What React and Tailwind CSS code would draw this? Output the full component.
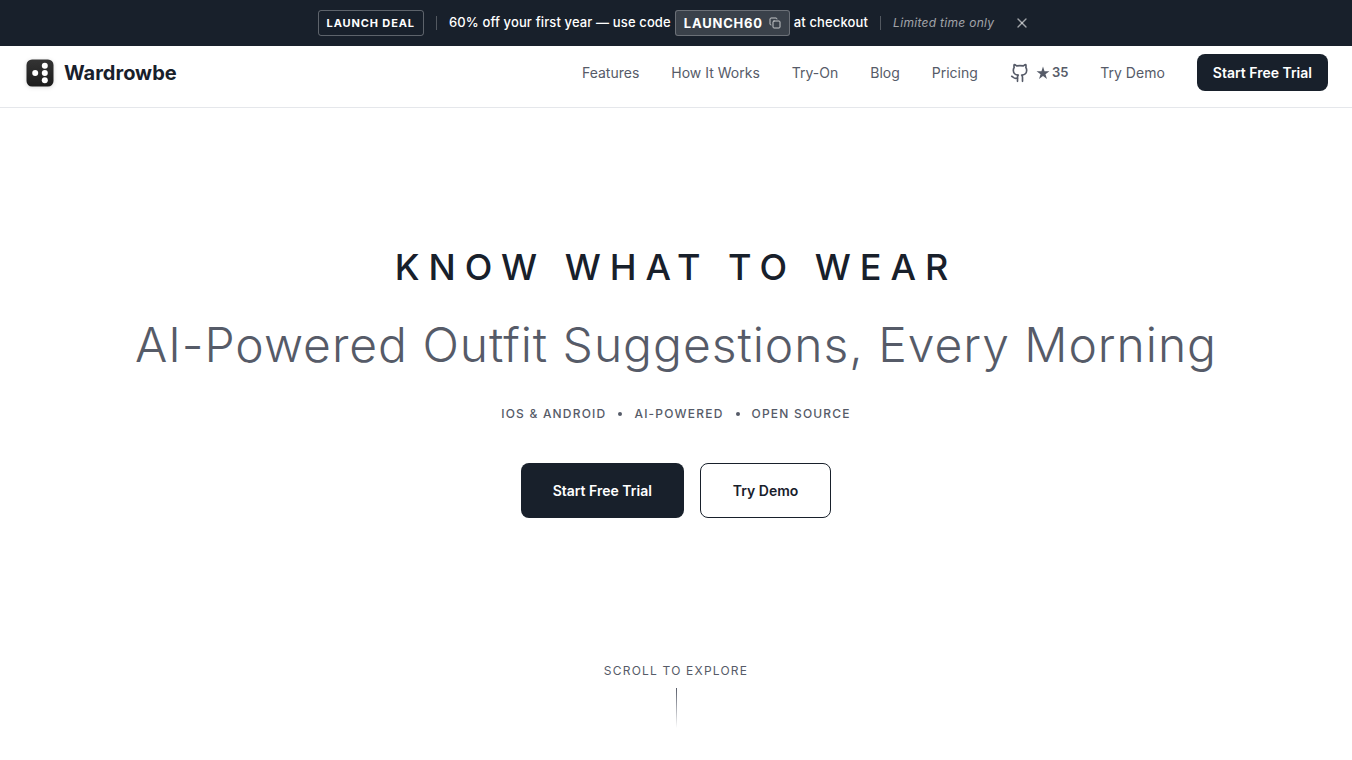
import { useState } from 'react';
import { Copy, Github, X } from 'lucide-react';

const NAV_LINKS = [
  { label: 'Features', href: '#features' },
  { label: 'How It Works', href: '#how-it-works' },
  { label: 'Try-On', href: '#try-on' },
  { label: 'Blog', href: '#blog' },
  { label: 'Pricing', href: '#pricing' },
];

const TAGS = ['iOS & Android', 'AI-Powered', 'Open Source'];

// ─── Logo mark ───────────────────────────────────────────────────────────────
function Logo() {
  return (
    <svg className="w-8 h-8 drop-shadow-sm" viewBox="0 0 32 32" aria-hidden="true">
      <defs>
        <linearGradient id="logo-bg" x1="0" y1="0" x2="0" y2="1">
          <stop offset="0" stopColor="#343434" />
          <stop offset="1" stopColor="#1b1b1b" />
        </linearGradient>
      </defs>
      <rect x="2.5" y="2.5" width="27" height="27" rx="5.5" fill="url(#logo-bg)" />
      <g fill="#fff">
        <circle cx="11.2" cy="16" r="3" />
        <circle cx="20.8" cy="8.8" r="3" />
        <circle cx="20.8" cy="16" r="3" />
        <circle cx="20.8" cy="23.2" r="3" />
      </g>
    </svg>
  );
}

function StarIcon() {
  return (
    <svg className="h-3.5 w-3.5" viewBox="0 0 24 24" fill="currentColor" aria-hidden="true">
      <path d="M12 1l2.6 8H23l-6.8 5 2.6 8.2L12 17.1l-6.8 5.1L7.8 14 1 9h8.4z" />
    </svg>
  );
}

// ─── Launch banner ───────────────────────────────────────────────────────────
function LaunchBanner({ onClose }) {
  return (
    <div className="flex h-[46px] items-center justify-center gap-3 bg-[#18202b] px-4 text-[13px] font-medium text-white">
      <span className="rounded-[3px] border border-white/30 px-2 py-1 text-[11px] leading-4 font-bold tracking-[0.08em]">
        LAUNCH DEAL
      </span>
      <span className="h-3.5 w-px bg-white/25" />
      <p className="flex items-center gap-1 tracking-[0.01em]">
        60% off your first year — use code
        <button
          type="button"
          className="flex items-center gap-1.5 rounded-[3px] border border-white/25 bg-white/15 px-2 py-0.5 leading-5 font-bold tracking-[0.06em]"
        >
          LAUNCH60
          <Copy className="h-3 w-3 opacity-70" />
        </button>
        at checkout
      </p>
      <span className="h-3.5 w-px bg-white/25" />
      <em className="text-xs font-normal tracking-wide text-white/60">Limited time only</em>
      <button type="button" aria-label="Dismiss" onClick={onClose} className="ml-1 p-1 text-white/60">
        <X className="h-4 w-4" />
      </button>
    </div>
  );
}

// ─── Top navigation ──────────────────────────────────────────────────────────
function Navbar() {
  return (
    <header className="flex items-center justify-between border-b border-gray-200 px-6 pt-2 pb-4">
      <a href="#home" className="flex items-center gap-2 text-xl font-bold">
        <Logo />
        Wardrowbe
      </a>
      <nav className="flex items-center gap-8 text-sm text-[#565b68]">
        {NAV_LINKS.map((link) => (
          <a key={link.label} href={link.href}>{link.label}</a>
        ))}
        <a href="#github" aria-label="GitHub stars" className="flex items-center gap-1.5">
          <Github className="h-5 w-5" />
          <span className="flex items-center gap-0.5 text-[13px] font-semibold">
            <StarIcon />
            35
          </span>
        </a>
        <a href="#demo">Try Demo</a>
        <a href="#trial" className="rounded-lg bg-[#18202b] px-4 py-2 leading-[21px] font-semibold text-white">
          Start Free Trial
        </a>
      </nav>
    </header>
  );
}

// ─── Hero ────────────────────────────────────────────────────────────────────
function Hero() {
  return (
    <main className="flex flex-1 flex-col items-center justify-center px-6 text-center">
      <h1 className="text-4xl leading-10 font-medium tracking-[0.25em] uppercase">Know What To Wear</h1>
      <p className="mt-7 text-5xl leading-[60px] font-light tracking-[0.02em] text-[#565b68]">
        AI-Powered Outfit Suggestions, Every Morning
      </p>
      <ul className="mt-[30px] flex items-center gap-3 text-xs leading-[18px] font-medium tracking-widest text-[#565b68] uppercase">
        {TAGS.map((tag, i) => (
          <li key={tag} className="flex items-center gap-3">
            {i > 0 && <span className="h-1 w-1 rounded-full bg-[#565b68]" />}
            {tag}
          </li>
        ))}
      </ul>
      <div className="mt-10 flex gap-4 text-sm font-semibold">
        <a href="#trial" className="rounded-lg bg-[#18202b] px-8 py-[17px] leading-[21px] text-white">
          Start Free Trial
        </a>
        <a href="#demo" className="rounded-lg border border-[#18202b] px-8 py-4 leading-[21px]">
          Try Demo
        </a>
      </div>
    </main>
  );
}

export default function App() {
  const [bannerOpen, setBannerOpen] = useState(true);

  return (
    <div className="flex min-h-screen flex-col bg-white font-[Inter,sans-serif] text-[#18202b]">
      {bannerOpen && <LaunchBanner onClose={() => setBannerOpen(false)} />}
      <Navbar />
      <Hero />
      <a href="#features" className="flex flex-col items-center gap-2 pt-1.5 pb-8 text-xs leading-[18px] tracking-widest text-[#565b68] uppercase">
        Scroll to explore
        <span className="h-10 w-px bg-gradient-to-b from-[#565b68] to-transparent" />
      </a>
    </div>
  );
}
